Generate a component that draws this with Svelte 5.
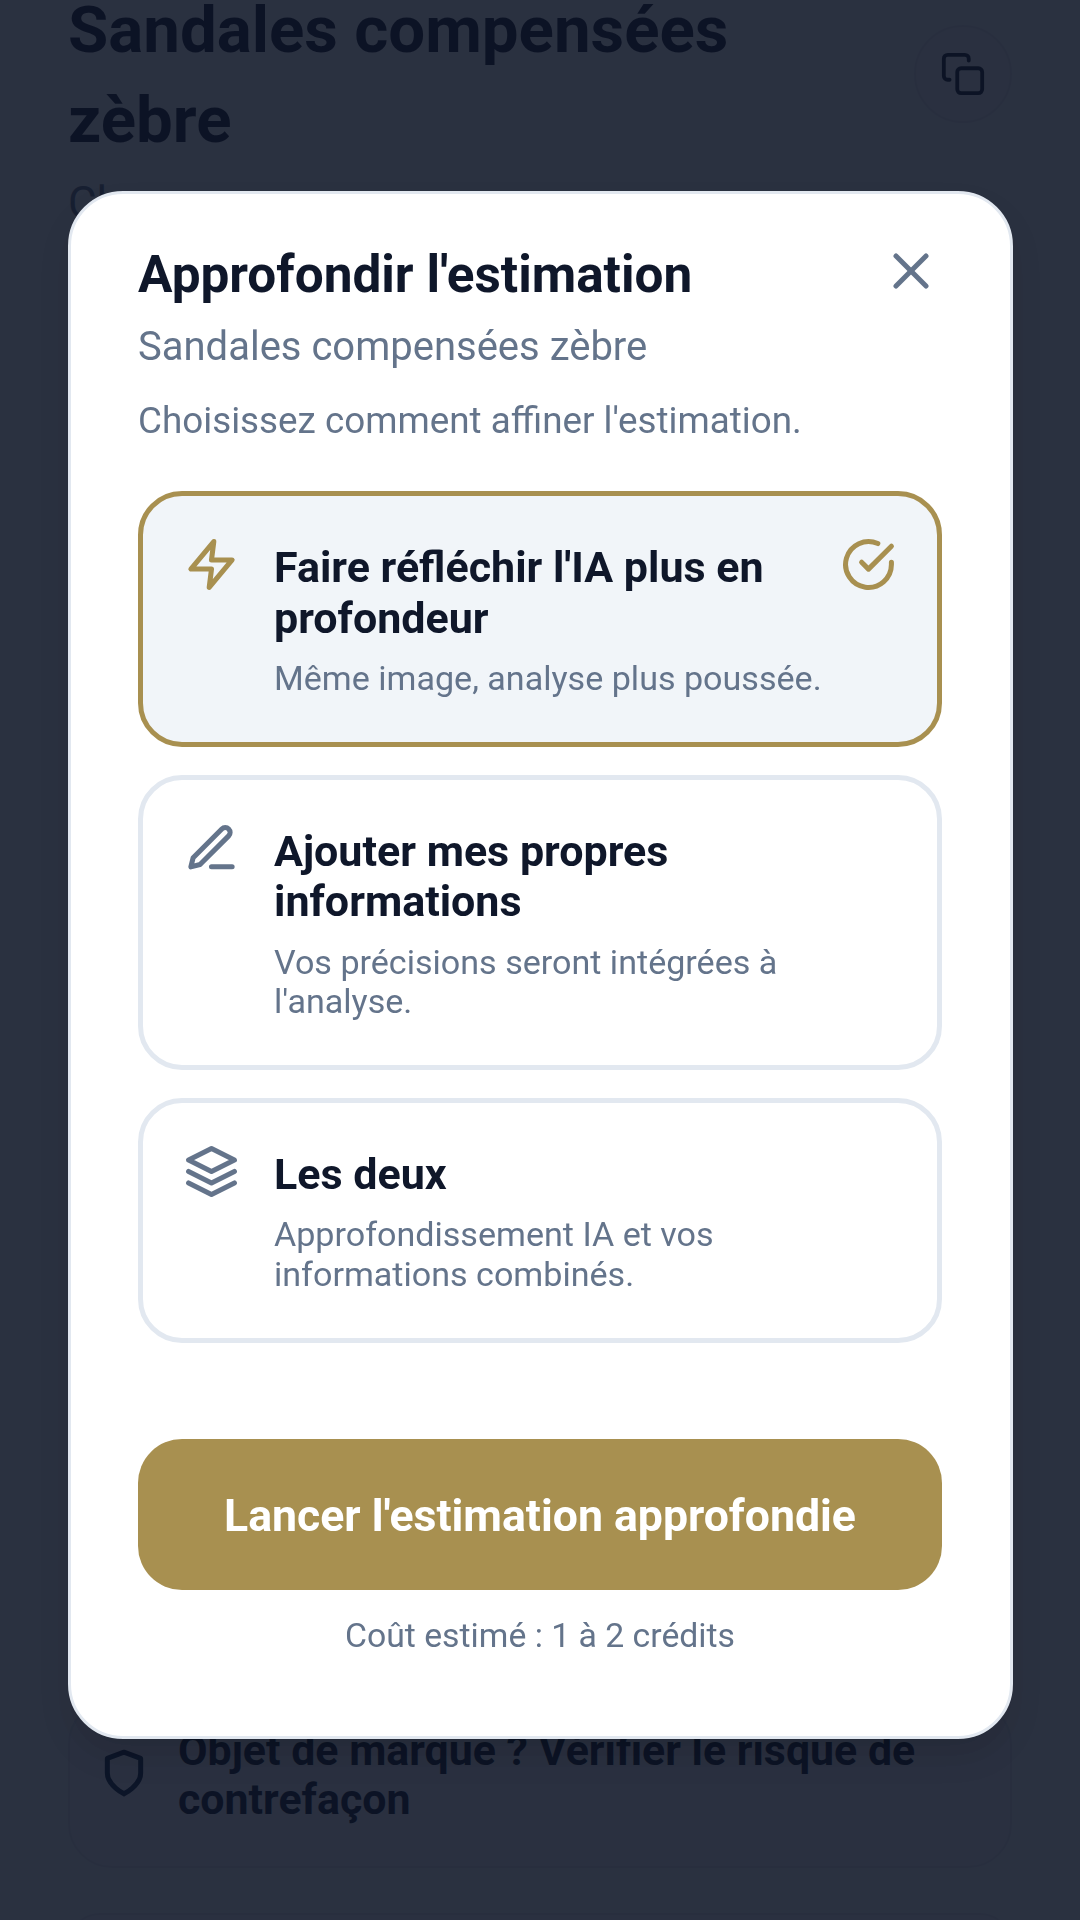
<script>
  const options = [
    { id: 'ai', icon: 'bolt', title: "Faire réfléchir l'IA plus en profondeur", desc: 'Même image, analyse plus poussée.', on: true },
    { id: 'me', icon: 'pen', title: 'Ajouter mes propres informations', desc: "Vos précisions seront intégrées à l'analyse." },
    { id: 'both', icon: 'layers', title: 'Les deux', desc: 'Approfondissement IA et vos informations combinés.' }
  ];
</script>

<div class="page">
  <header class="hero">
    <h1>Sandales compensées zèbre</h1>
    <button class="copy" aria-label="Copier">
      <svg viewBox="0 0 24 24" width="46" height="46" fill="none" stroke="currentColor" stroke-width="2" stroke-linecap="round" stroke-linejoin="round">
        <rect x="9" y="9" width="13" height="13" rx="2" />
        <path d="M5 15H4a2 2 0 0 1-2-2V4a2 2 0 0 1 2-2h9a2 2 0 0 1 2 2v1" />
      </svg>
    </button>
  </header>
  <p class="cat">Chaussures</p>
  <div class="spacer"></div>
  <section class="brand">
    <svg viewBox="0 0 24 24" width="50" height="50" fill="none" stroke="#0f2040" stroke-width="2.400" stroke-linecap="round" stroke-linejoin="round">
      <path d="M12 22s8-4 8-10V5l-8-3-8 3v7c0 6 8 10 8 10" />
    </svg>
    <span>Objet de marque ? Vérifier le risque de contrefaçon</span>
  </section>
  <div class="next"></div>
</div>

<div class="scrim">
  <div class="modal">
    <div class="head">
      <h2>Approfondir l'estimation</h2>
      <button class="close" aria-label="Fermer">
        <svg viewBox="0 0 24 24" width="60" height="60" fill="none" stroke="currentColor" stroke-width="2" stroke-linecap="round" stroke-linejoin="round">
          <path d="M18 6 6 18" /><path d="m6 6 12 12" />
        </svg>
      </button>
    </div>
    <p class="sub">Sandales compensées zèbre</p>
    <p class="hint">Choisissez comment affiner l'estimation.</p>

    <div class="options">
      {#each options as o}
        <div class="option" class:on={o.on}>
          <svg class="ico" viewBox="0 0 24 24" width="55" height="55" fill="none" stroke="currentColor" stroke-width="2.200" stroke-linecap="round" stroke-linejoin="round">
            {#if o.icon === 'bolt'}
              <polygon points="13 2 3 14 12 14 11 22 21 10 12 10 13 2" />
            {:else if o.icon === 'pen'}
              <path d="M12 20h9" />
              <path d="M16.500 3.500a2.120 2.120 0 0 1 3 3L7 19l-4 1 1-4Z" />
            {:else}
              <polygon points="12 2 2 7 12 12 22 7 12 2" />
              <polyline points="2 17 12 22 22 17" />
              <polyline points="2 12 12 17 22 12" />
            {/if}
          </svg>
          <div class="body">
            <div class="title">{o.title}</div>
            <div class="desc">{o.desc}</div>
          </div>
          {#if o.on}
            <svg class="check" viewBox="0 0 24 24" width="55" height="55" fill="none" stroke="currentColor" stroke-width="2.200" stroke-linecap="round" stroke-linejoin="round">
              <path d="M22 11.080V12a10 10 0 1 1-5.930-9.140" />
              <polyline points="22 4 12 14.010 9 11.010" />
            </svg>
          {/if}
        </div>
      {/each}
    </div>

    <button class="cta">Lancer l'estimation approfondie</button>
    <p class="cost">Coût estimé : 1 à 2 crédits</p>
  </div>
</div>

<style>
  :global(body) {
    margin: 0;
    background: #f8fafc;
    font-family: Roboto, "Liberation Sans", sans-serif;
    font-variant-ligatures: common-ligatures;
  }
  .page {
    height: 1920px;
    overflow: hidden;
    box-sizing: border-box;
    padding: 0 68px;
    color: #0f172a;
  }
  .hero {
    display: flex;
    justify-content: space-between;
    align-items: flex-start;
    margin-top: -15px;
  }
  h1 {
    margin: 0;
    width: 720px;
    font-size: 65.400px;
    line-height: 90px;
    font-weight: 700;
  }
  .copy {
    width: 98px;
    height: 98px;
    margin-top: 40px;
    padding: 0;
    border-radius: 50%;
    border: 2px solid #e2e8f0;
    background: #f4f6f9;
    color: #0f172a;
    display: flex;
    align-items: center;
    justify-content: center;
  }
  .cat {
    margin: 11px 0 0;
    font-size: 44px;
    line-height: 55px;
    color: #64748b;
  }
  .spacer {
    height: 1469px;
  }
  .brand {
    box-sizing: border-box;
    height: 168px;
    display: flex;
    align-items: flex-start;
    gap: 29px;
    padding: 24px 29px 0;
    border: 2px solid #e2e8f0;
    border-radius: 44px;
    background: #f4f6f9;
    font-size: 42.900px;
    line-height: 49px;
    font-weight: 700;
  }
  .brand svg {
    flex: none;
    margin-top: 22px;
  }
  .next {
    height: 60px;
    margin-top: 45px;
    border: 2px solid #e2e8f0;
    border-radius: 44px;
    background: #f4f6f9;
  }
  .scrim {
    position: fixed;
    inset: 0;
    background: rgba(13, 20, 37, 0.875);
    display: flex;
    justify-content: flex-start;
    align-items: flex-start;
  }
  .modal {
    box-sizing: border-box;
    width: 945px;
    height: 1548px;
    margin: 191px 0 0 68px;
    padding: 48px 68px 0 67px;
    background: #fff;
    border: 3px solid #e2e8f0;
    border-radius: 55px;
    box-shadow: 0 18px 30px rgba(0, 0, 0, 0.12);
  }
  .head {
    display: flex;
    justify-content: space-between;
    align-items: flex-start;
  }
  h2 {
    margin: 0;
    font-size: 51.300px;
    line-height: 66px;
    font-weight: 700;
    color: #0f172a;
  }
  .close {
    padding: 0;
    margin: -1px 1px 0 0;
    border: 0;
    background: none;
    color: #64748b;
    display: flex;
  }
  .sub {
    margin: 11px 0 0;
    font-size: 40px;
    line-height: 55px;
    color: #64748b;
  }
  .hint {
    margin: 18.500px 0 0;
    font-size: 36.800px;
    line-height: 55px;
    color: #64748b;
  }
  .options {
    display: flex;
    flex-direction: column;
    gap: 27.500px;
    margin-top: 43.500px;
  }
  .option {
    display: flex;
    align-items: flex-start;
    padding: 41px 41px 43.500px 41px;
    border: 5.500px solid #e2e8f0;
    border-radius: 44px;
    background: #fff;
    color: #64748b;
  }
  .option.on {
    border-color: #a89050;
    background: #f1f5f9;
    color: #a89050;
  }
  .ico,
  .check {
    flex: none;
  }
  .body {
    flex: 1;
    margin: 5px 0 0 35px;
  }
  .title {
    font-size: 43px;
    line-height: 50.500px;
    font-weight: 700;
    color: #0f172a;
  }
  .desc {
    margin-top: 16px;
    font-size: 34.100px;
    line-height: 39.500px;
    color: #64748b;
  }
  .cta {
    display: block;
    width: 100%;
    height: 151px;
    margin-top: 96px;
    padding-top: 5px;
    border: 0;
    border-radius: 44px;
    background: #a89050;
    color: #fff;
    font: 700 44.600px Roboto, sans-serif;
  }
  .cost {
    margin: 24px 0 0;
    text-align: center;
    font-size: 33.750px;
    line-height: 44px;
    color: #64748b;
  }
</style>
